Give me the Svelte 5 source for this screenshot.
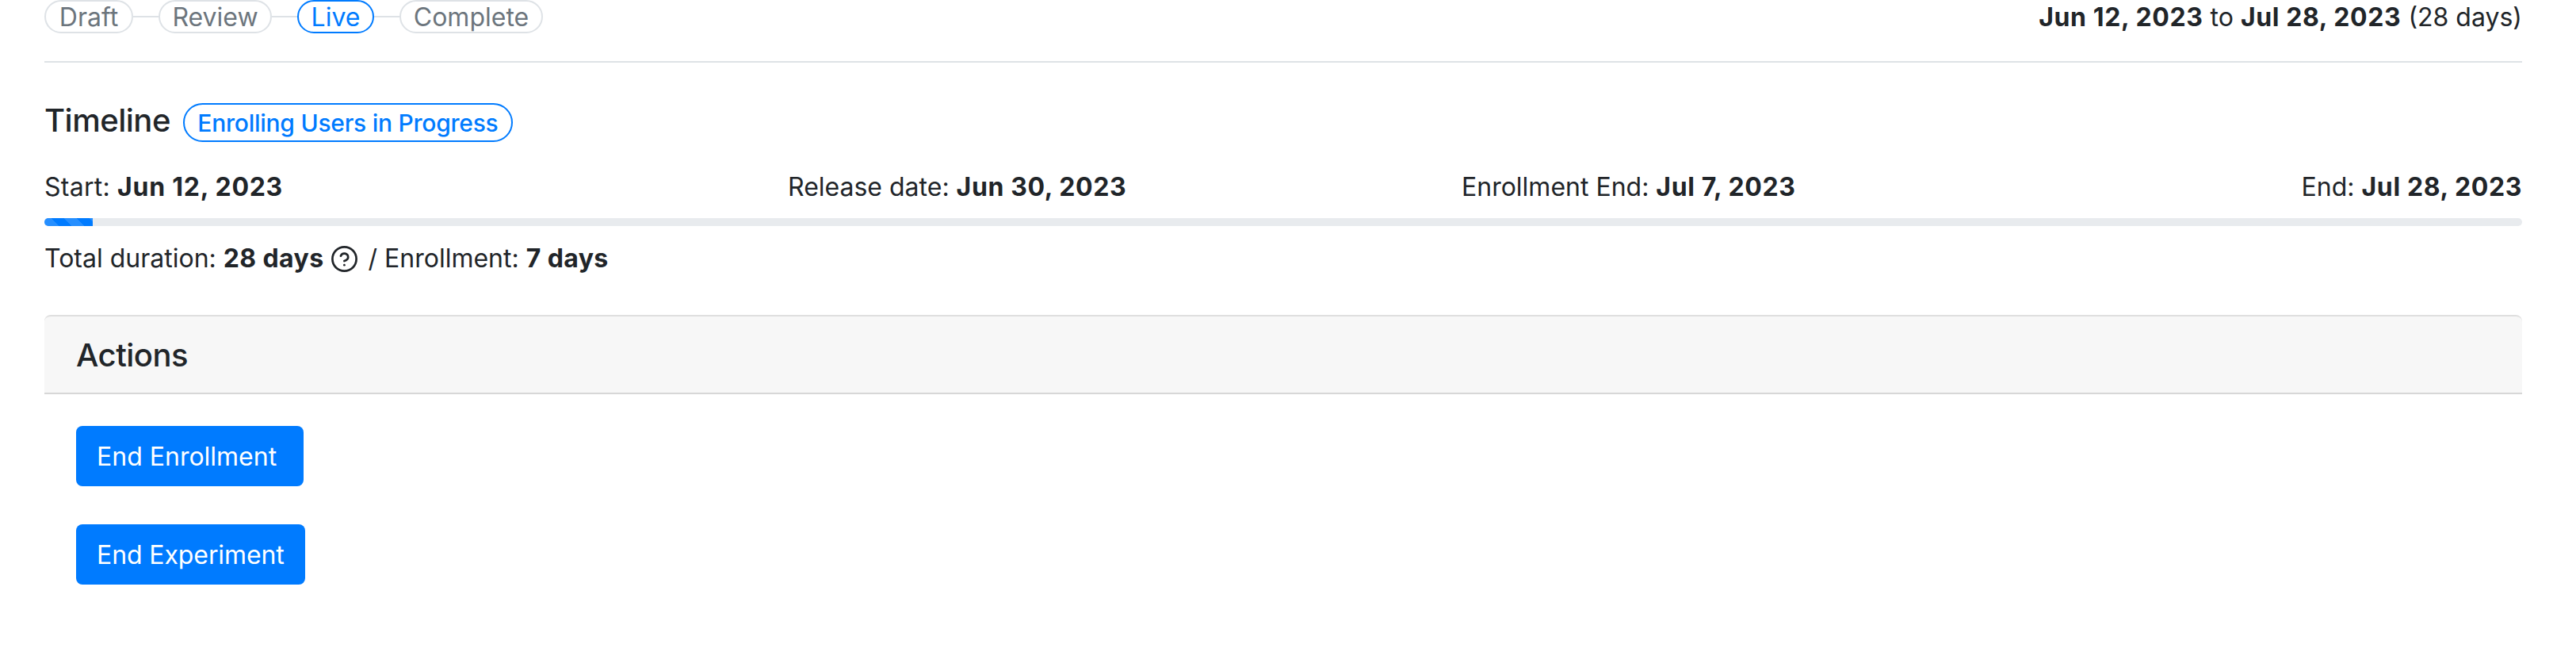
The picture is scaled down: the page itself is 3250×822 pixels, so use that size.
<script>
  const steps = [
    { name: 'Draft', width: 112 },
    { name: 'Review', width: 143 },
    { name: 'Live', width: 97, active: true },
    { name: 'Complete', width: 181 }
  ];
  const dates = [
    { label: 'Start:', value: 'Jun 12, 2023' },
    { label: 'Release date:', value: 'Jun 30, 2023' },
    { label: 'Enrollment End:', value: 'Jul 7, 2023' },
    { label: 'End:', value: 'Jul 28, 2023' }
  ];
  const progress = 1.95;
</script>

<main>
  <header class="status">
    <ol class="steps">
      {#each steps as step}
        <li class="step" class:active={step.active} style="width: {step.width}px">{step.name}</li>
      {/each}
    </ol>
    <p class="range"><b>Jun 12, 2023</b> to <b>Jul 28, 2023</b> (28 days)</p>
  </header>

  <section class="timeline">
    <div class="heading">
      <h5>Timeline</h5>
      <span class="badge">Enrolling Users in Progress</span>
    </div>
    <div class="dates">
      {#each dates as d}
        <span>{d.label} <b>{d.value}</b></span>
      {/each}
    </div>
    <div class="progress"><div class="bar" style="width: {progress}%"></div></div>
    <div class="duration">
      <span>Total duration: <b>28 days</b></span>
      <svg class="help" viewBox="0 0 33 33" fill="none" stroke="currentColor" stroke-width="2.7" stroke-linecap="round" stroke-linejoin="round">
        <circle cx="16.5" cy="16.5" r="15.1" />
        <path d="M11.9 12.7a4.8 4.8 0 0 1 9.3 1.6c0 3.2-4.8 4.7-4.8 4.7" />
        <path d="M16.4 24.2h.02" />
      </svg>
      <span>/ Enrollment: <b>7 days</b></span>
    </div>
  </section>

  <section class="card">
    <h5 class="card-header">Actions</h5>
    <div class="card-body">
      <button class="enrollment">End Enrollment</button>
      <button class="experiment">End Experiment</button>
    </div>
  </section>
</main>

<style>
  :global(body) { background: #fff; }
  main {
    box-sizing: border-box;
    height: 822px;
    padding: 0 68px 0 56px;
    overflow: hidden;
    color: #212529;
    font: 400 32px/48px Inter, "Liberation Sans", sans-serif;
    white-space: nowrap;
  }
  b { font-weight: 700; letter-spacing: .62px; }
  h5, p, ol { margin: 0; padding: 0; }
  h5 { font-size: 40px; font-weight: 500; line-height: 48px; letter-spacing: -.5px; }
  .status {
    display: flex;
    justify-content: space-between;
    align-items: flex-start;
    box-sizing: border-box;
    height: 79px;
    border-bottom: 2px solid #dee2e6;
  }
  .steps { display: flex; gap: 32px; list-style: none; }
  .step {
    position: relative;
    box-sizing: border-box;
    height: 42px;
    border: 2px solid #dee2e6;
    border-radius: 21px;
    color: #6c757d;
    line-height: 39px;
    text-align: center;
  }
  .step.active { border-color: #007bff; color: #007bff; }
  .step:not(:last-child)::after {
    content: "";
    position: absolute;
    left: calc(100% + 2px);
    top: 18px;
    width: 32px;
    height: 2px;
    background: #dee2e6;
  }
  .range { line-height: 43px; }
  .heading { display: flex; align-items: flex-start; gap: 16px; padding-top: 49px; height: 51px; }
  .badge {
    box-sizing: border-box;
    width: 416px;
    height: 49px;
    margin-top: 2px;
    border: 2px solid #007bff;
    border-radius: 25px;
    color: #007bff;
    font-size: 30px;
    font-weight: 500;
    letter-spacing: -.25px;
    line-height: 47px;
    text-align: center;
  }
  .dates { display: grid; grid-template-columns: 938px 850px 1fr auto; height: 63px; padding-top: 33px; }
  .dates span:first-child { letter-spacing: .25px; }
  .dates span:first-child b { letter-spacing: .75px; }
  .progress { height: 10px; border-radius: 8px; background: #e8ebee; overflow: hidden; }
  .bar {
    height: 10px;
    background: #007bff linear-gradient(45deg, rgba(255,255,255,.15) 25%, transparent 25%, transparent 50%, rgba(255,255,255,.15) 50%, rgba(255,255,255,.15) 75%, transparent 75%) -8px 0 / 32px 32px;
  }
  .duration { display: flex; align-items: flex-start; padding-top: 16px; height: 48px; }
  .duration span { margin-top: 1px; }
  .duration b { letter-spacing: .4px; }
  .help { width: 33px; height: 33px; margin: 9px 14px 0 9px; }
  .card { margin-top: 48px; }
  .card-header {
    box-sizing: border-box;
    height: 100px;
    padding: 25px 40px;
    border-top: 2px solid #dfdfdf;
    border-bottom: 2px solid #d7d7d7;
    border-radius: 8px 8px 0 0;
    background: #f7f7f7;
  }
  .card-body { display: flex; flex-direction: column; align-items: flex-start; gap: 48px; padding: 40px; }
  button {
    height: 76px;
    padding: 2px 26px 0;
    border: 0;
    border-radius: 8px;
    background: #007bff;
    color: #fff;
    font: inherit;
    text-align: left;
  }
  .enrollment { width: 287px; }
  .experiment { width: 289px; letter-spacing: -.1px; }
</style>
